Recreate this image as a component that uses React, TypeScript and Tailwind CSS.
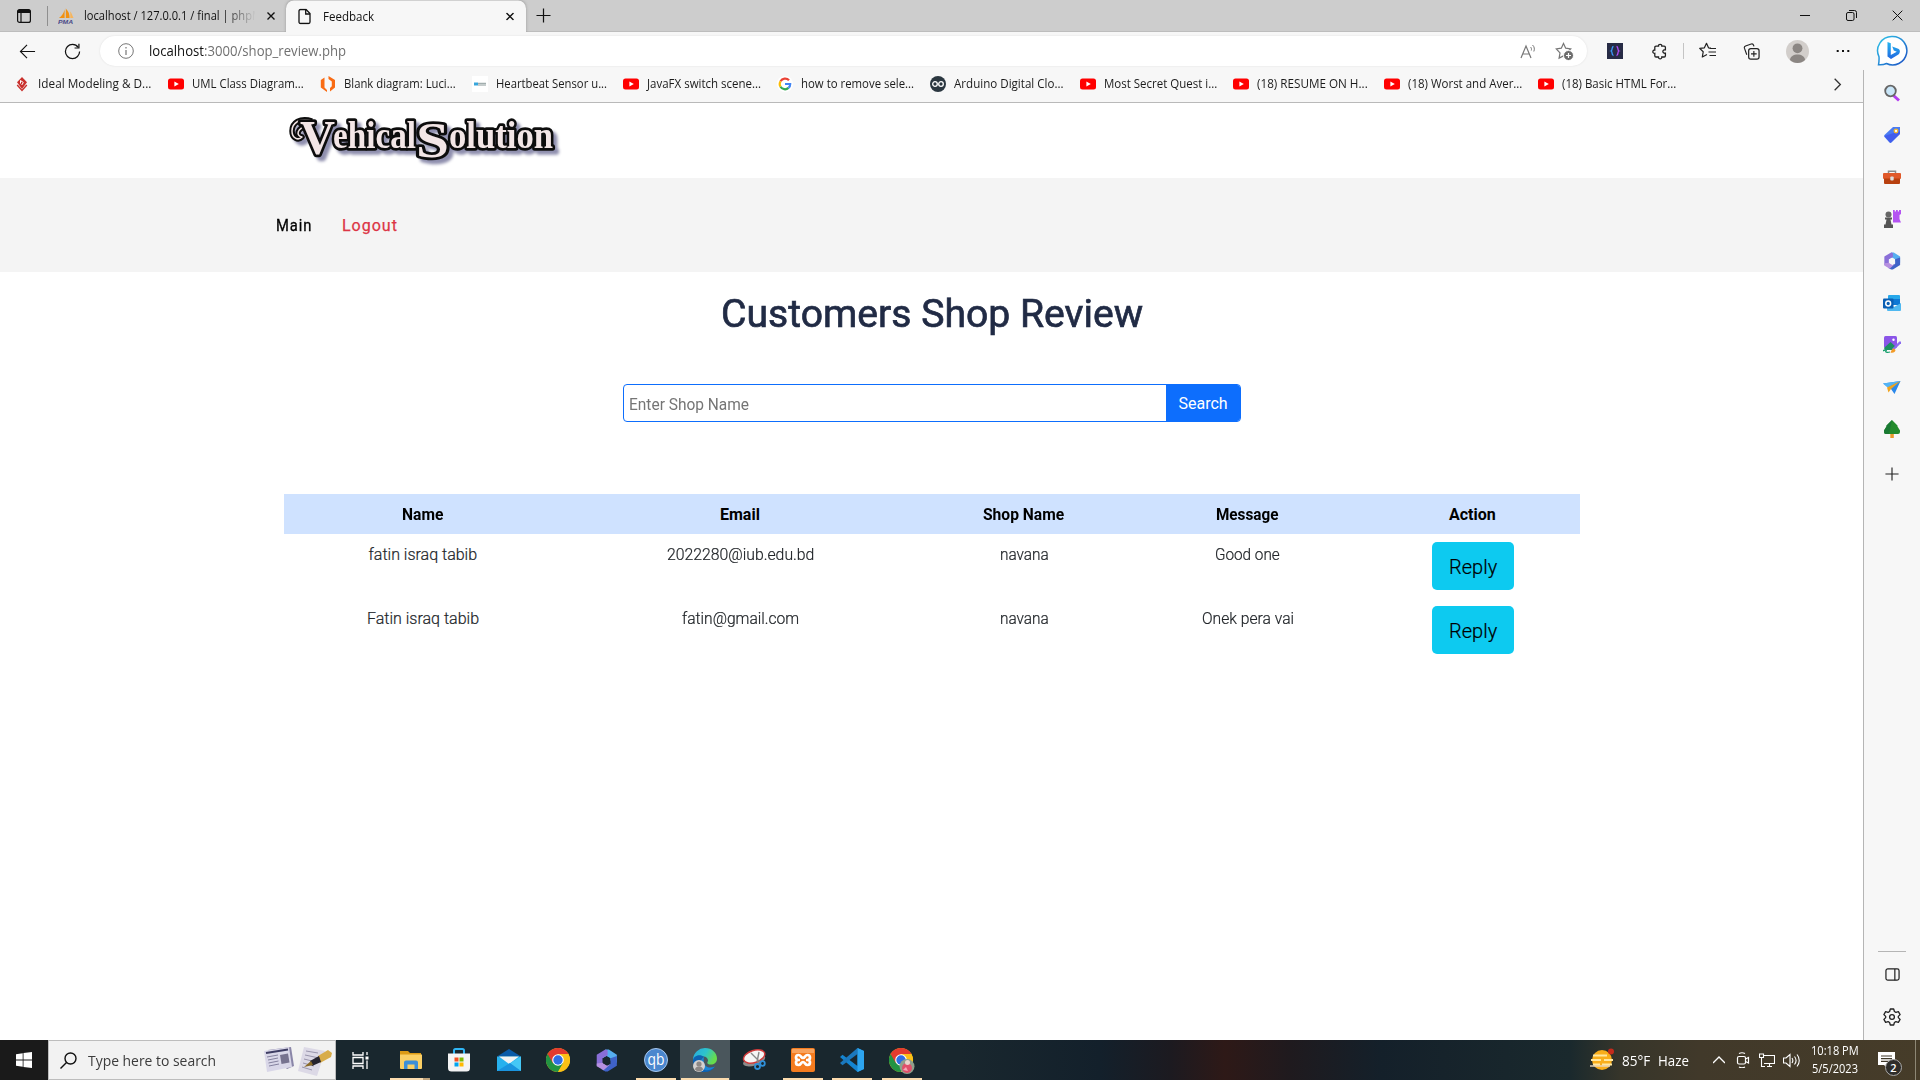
import { useLayoutEffect, useRef, useState, type ReactNode } from "react";

/** One line of text condensed or stretched to an exact width. */
function Fit({ w, className = "", children }: { w: number; className?: string; children: ReactNode }) {
  const ref = useRef<HTMLSpanElement>(null);
  const [scale, setScale] = useState(1);
  useLayoutEffect(() => {
    if (ref.current) setScale(w / ref.current.offsetWidth);
  }, [w]);
  return (
    <span className={`inline-block shrink-0 text-left whitespace-nowrap ${className}`} style={{ width: w }}>
      <span ref={ref} className="inline-block origin-left" style={{ transform: `scaleX(${scale})` }}>
        {children}
      </span>
    </span>
  );
}

function Cell({ className, children }: { className: string; children: ReactNode }) {
  return <div className={`flex shrink-0 items-center justify-center ${className}`}>{children}</div>;
}

function Ico({ s = 16, vb = 16, className = "", children }: { s?: number; vb?: number; className?: string; children: ReactNode }) {
  return (
    <svg width={s} height={s} viewBox={`0 0 ${vb} ${vb}`} fill="none" className={`shrink-0 ${className}`}>
      {children}
    </svg>
  );
}

const CloseX = ({ s = 8, sw = 1.4 }: { s?: number; sw?: number }) => (
  <Ico s={s} vb={8}><path d="M.5.5l7 7M7.5.5l-7 7" stroke="#111" strokeWidth={(sw * 8) / s} /></Ico>
);

/* ---------- Tab strip ---------- */
function TabStrip() {
  return (
    <div className="flex h-8 shrink-0 items-center border-b border-[#bdbdbd] bg-[#cdcdcd] text-[12px] text-[#111]">
      <Cell className="w-[47px]">
        <Ico s={16}>
          <rect x="1.6" y="1.6" width="12.8" height="12.8" rx="2" stroke="#111" strokeWidth="1.2" />
          <path d="M1.5 3.5a2 2 0 012-2h9a2 2 0 012 2V5h-13z" fill="#111" />
          <path d="M5 5v9" stroke="#111" strokeWidth="1.2" />
        </Ico>
      </Cell>
      <div className="h-5 w-px bg-[#8f8f8f]" />
      <div className="flex h-full w-[238px] items-center">
        <Cell className="ml-[10px] w-4">
          <svg width="17" height="16" viewBox="0 0 17 16">
            <path d="M7 1v9H1C4 8 6 5 7 1zM8.3 0c3 3 4 6 4 10h-4z" fill="#f29111" />
            <path d="M13 3c1.500 2 2 4 3.500 7H13z" fill="#f7b55c" />
            <text x="0" y="16" fontSize="6.500" fontWeight="900" fontStyle="italic" fontFamily="Liberation Sans" fill="#4a4a88" textLength="16" lengthAdjust="spacingAndGlyphs">PMA</text>
          </svg>
        </Cell>
        <div className="ml-[10px] w-[175px] [mask-image:linear-gradient(to_right,black_80%,transparent_98%)]">
          <Fit w={178}>localhost / 127.0.0.1 / final | phpM</Fit>
        </div>
        <Cell className="ml-[6px] w-3"><CloseX /></Cell>
      </div>
      <div className="flex h-8 w-60 translate-y-[0.500px] items-center rounded-t-lg bg-[#f7f7f7] shadow-[0_0_3px_#999] [clip-path:inset(0_-3px_0_-3px)]">
        <Cell className="ml-[11px] w-4">
          <Ico s={16}>
            <path d="M3.500 1H9l4 4v8.500a1.500 1.500 0 01-1.500 1.500h-8A1.500 1.500 0 012 13.500v-11A1.500 1.500 0 013.500 1z" stroke="#111" strokeWidth="1.300" />
            <path d="M8.700 1v4.500H13" stroke="#111" strokeWidth="1.300" />
          </Ico>
        </Cell>
        <div className="ml-[10px] w-[180px]"><Fit w={51}>Feedback</Fit></div>
        <Cell className="ml-px w-3"><CloseX /></Cell>
      </div>
      <Cell className="w-[34px]"><Ico s={15}><path d="M8 .5v15M.5 8h15" stroke="#111" strokeWidth="1.300" /></Ico></Cell>
      <div className="flex-1" />
      <Cell className="w-[46px]"><div className="h-px w-[10px] bg-[#111]" /></Cell>
      <Cell className="w-[46px]">
        <Ico s={11} vb={11}>
          <rect x=".5" y="2.500" width="7.500" height="8" rx="1.500" stroke="#111" />
          <path d="M3 .5h5.500a2 2 0 012 2V8" stroke="#111" />
        </Ico>
      </Cell>
      <Cell className="w-[46px]"><CloseX s={11} sw={1} /></Cell>
    </div>
  );
}

/* ---------- Address bar row ---------- */
function Toolbar() {
  return (
    <div className="flex h-[38px] shrink-0 items-center">
      <Cell className="w-[55px]">
        <Ico s={17} vb={18}><path d="M17 9H1.500M8.500 2L1.500 9l7 7" stroke="#111" strokeWidth="1.200" /></Ico>
      </Cell>
      <Cell className="w-[34px]">
        <Ico s={17} vb={18}>
          <path d="M16.500 9A7.500 7.500 0 119 1.500c2.600 0 4.800 1.300 6 3.200" stroke="#111" strokeWidth="1.300" />
          <path d="M15.800.8v4.500h-4.600" stroke="#111" strokeWidth="1.300" />
        </Ico>
      </Cell>
      <div className="ml-[11px] flex h-[30px] w-[1487px] shrink-0 items-center rounded-full bg-white shadow-[0_0_2px_#ddd]">
        <Cell className="w-[52px]">
          <Ico s={16}>
            <circle cx="8" cy="8" r="7.300" stroke="#767676" />
            <path d="M8 7v5M8 4v1.500" stroke="#767676" strokeWidth="1.200" />
          </Ico>
        </Cell>
        <div className="-ml-[3px] text-[14px] leading-5 text-[#707070]">
          <Fit w={197}><span className="text-[#111]">localhost</span>:3000/shop_review.php</Fit>
        </div>
        <div className="flex-1" />
        <Cell className="w-9">
          <Ico s={17} vb={17}>
            <path d="M1 15L6 3l5 12M2.800 11h6.400" stroke="#767676" strokeWidth="1.200" />
            <path d="M10.500 4c1 .9 1.200 2.300.8 3.500M12.500 2c2 1.700 2.300 4.300 1.300 6.500" stroke="#767676" />
          </Ico>
        </Cell>
        <Cell className="mr-[5px] w-9">
          <Ico s={19} vb={19}>
            <path d="M8.500 1.500l2.200 4.700 5 .7-3.600 3.500.3 2-3.900 1.500-4.400 2.200.9-5.200L1.300 6.900l5-.7z" stroke="#767676" strokeWidth="1.200" />
            <circle cx="13.500" cy="13.500" r="5" fill="#6d6d6d" stroke="#fff" />
            <path d="M13.500 11v5M11 13.500h5" stroke="#fff" strokeWidth="1.200" />
          </Ico>
        </Cell>
      </div>
      <Cell className="w-14">
        <Ico s={16}>
          <rect width="16" height="16" fill="#272b45" />
          <path d="M6.500 3.500c-2.200 0-.8 4-2.300 4.500 1.500.5.100 4.500 2.300 4.500" stroke="#3b9bff" strokeWidth="1.300" />
          <path d="M9.500 3.500c2.200 0 .8 4 2.300 4.500-1.500.5-.1 4.500-2.300 4.500" stroke="#b44cff" strokeWidth="1.300" />
        </Ico>
      </Cell>
      <Cell className="w-[34px]">
        <Ico s={17} vb={17}>
          <path d="M4 3.200h2.500c-.3-2.500 3.600-2.500 3.300 0h2.400a1.200 1.200 0 011.200 1.200v2.400c-3.400-.5-3.400 3.900 0 3.400v2.600a1.200 1.200 0 01-1.200 1.200H9.800c.3 2.500-3.600 2.500-3.300 0H4a1.200 1.200 0 01-1.200-1.200v-2.500c-2.600.3-2.600-3.600 0-3.300V4.400A1.200 1.200 0 014 3.200z" stroke="#222" strokeWidth="1.300" />
        </Ico>
      </Cell>
      <Cell className="w-3"><div className="h-4 w-px bg-[#c4c4c4]" /></Cell>
      <Cell className="w-[38px]">
        <Ico s={18} vb={18}>
          <path d="M12 6l-2.500-.2L7.500 1.300 5.400 5.800l-4.700.6 3.500 3.400-.9 5.200L8 12.500" stroke="#222" strokeWidth="1.200" strokeLinejoin="round" />
          <path d="M10.500 6.500H17M9.500 10H17M10.500 13.500H17" stroke="#222" strokeWidth="1.200" />
        </Ico>
      </Cell>
      <Cell className="w-[49px]">
        <Ico s={17} vb={18}>
          <rect x="6" y="6" width="11" height="11" rx="2.300" stroke="#222" strokeWidth="1.300" />
          <path d="M11.500 8.500v6M8.500 11.500h6" stroke="#222" strokeWidth="1.200" />
          <path d="M4 12.500l-2.500-7a2 2 0 011.200-2.400l6-2a2 2 0 012.500 1.300l.4 1.200" stroke="#222" strokeWidth="1.200" />
        </Ico>
      </Cell>
      <Cell className="w-[42px]">
        <Ico s={23} vb={23}>
          <circle cx="11.500" cy="11.500" r="11.500" fill="#d2cecb" />
          <circle cx="11.500" cy="8.300" r="4.900" fill="#8b8683" />
          <path d="M4 20c0-7.500 15-7.500 15 0-4 4-11 4-15 0z" fill="#8b8683" />
        </Ico>
      </Cell>
      <Cell className="w-[45px] pl-[5px]">
        <Ico s={14} vb={14}><path d="M.7 7h2M6 7h2M11.300 7h2" stroke="#111" strokeWidth="2" /></Ico>
      </Cell>
    </div>
  );
}

/* ---------- Bookmarks ---------- */
const YouTube = () => (
  <Ico s={16}><rect y="2.500" width="16" height="11" rx="2.500" fill="#f00" /><path d="M6.400 5.600v4.800L10.800 8z" fill="#fff" /></Ico>
);
const bookmarks: { label: string; w: number; cell: string; icon: ReactNode }[] = [
  {
    label: "Ideal Modeling & D...", w: 113, cell: "w-[154px]",
    icon: <Ico s={16}><path d="M8 1l5 5.200L8 13 3 6.200z" fill="#c9302c" /><path d="M3.200 9L8 14.500 12.800 9" stroke="#c9302c" strokeWidth="1.400" /><path d="M6.500 7.500v-3l2.800 2-1.600 2.500" stroke="#fff" /></Ico>,
  },
  { label: "UML Class Diagram...", w: 112, cell: "w-[152px]", icon: <YouTube /> },
  {
    label: "Blank diagram: Luci...", w: 112, cell: "w-[152px]",
    icon: <Ico s={16}><path d="M4.500 1.500v10l2.500 2.500v2L.8 11.500V4zM8.500 0l6.500 4v7.500l-5 4v-3.500l1.800-1.700V5.500L8.500 3z" fill="#f96b13" /></Ico>,
  },
  {
    label: "Heartbeat Sensor u...", w: 111, cell: "w-[151px]",
    icon: <Ico s={16}><rect width="16" height="16" fill="#fff" /><path d="M2 8h4" stroke="#38a6dc" strokeWidth="3" /><path d="M6 7.300h8M6 9h8" stroke="#8b9a9a" /></Ico>,
  },
  { label: "JavaFX switch scene...", w: 114, cell: "w-[154px]", icon: <YouTube /> },
  {
    label: "how to remove sele...", w: 113, cell: "w-[153px]",
    icon: <Ico s={16}>
      <circle cx="8" cy="8" r="8" fill="#fff" />
      <path d="M12 4.300A5.200 5.200 0 003.500 5.300" stroke="#ea4335" strokeWidth="2.200" />
      <path d="M3.500 5.300a5.200 5.200 0 000 5.400" stroke="#fbbc05" strokeWidth="2.200" />
      <path d="M3.500 10.700a5.200 5.200 0 008 1.200" stroke="#34a853" strokeWidth="2.200" />
      <path d="M11.500 11.900A5 5 0 0013.200 8H8" stroke="#4285f4" strokeWidth="2.200" />
    </Ico>,
  },
  {
    label: "Arduino Digital Clo...", w: 110, cell: "w-[150px]",
    icon: <Ico s={16}><circle cx="8" cy="8" r="8" fill="#2b3740" /><circle cx="5" cy="8" r="2.300" stroke="#fff" strokeWidth="1.300" /><circle cx="11" cy="8" r="2.300" stroke="#fff" strokeWidth="1.300" /></Ico>,
  },
  { label: "Most Secret Quest i...", w: 113, cell: "w-[153px]", icon: <YouTube /> },
  { label: "(18) RESUME ON H...", w: 111, cell: "w-[151px]", icon: <YouTube /> },
  { label: "(18) Worst and Aver...", w: 114, cell: "w-[154px]", icon: <YouTube /> },
  { label: "(18) Basic HTML For...", w: 114, cell: "w-[150px]", icon: <YouTube /> },
];

function Bookmarks() {
  return (
    <div className="flex h-[33px] shrink-0 items-center border-b border-[#b9b9b9] pb-1 pl-[14px] text-[12px] leading-4 text-[#1b1b1b]">
      {bookmarks.map((b) => (
        <div key={b.label} className={`flex shrink-0 items-center gap-2 ${b.cell}`}>
          {b.icon}
          <Fit w={b.w}>{b.label}</Fit>
        </div>
      ))}
      <div className="flex-1" />
      <Cell className="mr-[18px] w-4"><Ico s={13}><path d="M4.500 1l7 7-7 7" stroke="#333" strokeWidth="1.600" /></Ico></Cell>
    </div>
  );
}

/* ---------- Web page ---------- */
function Logo() {
  const flourish = "M34 18C22 14 14 20 14 28c0 7 6 10 10 6-6-1-6-9 6-11";
  return (
    <svg
      width="296" height="72" viewBox="0 0 296 72"
      fontFamily="Liberation Serif" fontWeight="700" fill="#f3e6e6" stroke="#0d0d0d" strokeWidth="5.500" strokeLinejoin="round" paintOrder="stroke"
      className="[filter:drop-shadow(4px_4px_1.500px_#8f8fae)]"
    >
      <path d={flourish} fill="none" />
      <path d={flourish} fill="none" stroke="#f3e6e6" strokeWidth="1.500" />
      <text x="22" y="51" fontSize="49" textLength="35" lengthAdjust="spacingAndGlyphs">V</text>
      <text x="55" y="45" fontSize="37" textLength="83" lengthAdjust="spacingAndGlyphs">ehical</text>
      <text x="138" y="54" fontSize="50" textLength="33" lengthAdjust="spacingAndGlyphs">S</text>
      <text x="171" y="45" fontSize="37" textLength="104" lengthAdjust="spacingAndGlyphs">olution</text>
    </svg>
  );
}

const columns = [
  { title: "Name", w: 41, cell: "w-[278px]" },
  { title: "Email", w: 40, cell: "w-[357px]" },
  { title: "Shop Name", w: 81, cell: "w-[210px]" },
  { title: "Message", w: 62, cell: "w-[237px]" },
  { title: "Action", w: 47, cell: "w-[214px]" },
];
const rows: { text: string; w: number }[][] = [
  [{ text: "fatin israq tabib", w: 109 }, { text: "2022280@iub.edu.bd", w: 147 }, { text: "navana", w: 49 }, { text: "Good one", w: 65 }],
  [{ text: "Fatin israq tabib", w: 112 }, { text: "fatin@gmail.com", w: 117 }, { text: "navana", w: 49 }, { text: "Onek pera vai", w: 92 }],
];

function ReviewPage() {
  return (
    <main className="flex min-h-0 flex-1 flex-col bg-white font-[Roboto,sans-serif] text-[16px] leading-6">
      <header className="h-[75px] shrink-0 pl-[278px]"><Logo /></header>
      <nav className="flex h-[94px] shrink-0 items-center gap-[30px] bg-[#f4f4f4] pt-0.5 pl-[276px]">
        <Fit w={36} className="tracking-[1px] text-black [-webkit-text-stroke:0.300px]">Main</Fit>
        <Fit w={56} className="tracking-[1px] text-[#dc3545] [-webkit-text-stroke:0.250px]">Logout</Fit>
      </nav>
      <h1 className="mt-[18px] flex justify-center text-[39.500px] leading-[48px] text-[#212b45] [-webkit-text-stroke:0.700px]">
        <Fit w={422}>Customers Shop Review</Fit>
      </h1>
      <form className="mx-auto mt-[46px] flex h-[38px] w-[618px] overflow-hidden rounded-[4px] border border-[#0d6efd]">
        <div className="flex-1 pt-2 pl-[5px] text-[#757575]"><Fit w={120}>Enter Shop Name</Fit></div>
        <div className="flex w-[74px] items-center justify-center bg-[#0d6efd] pt-0.5 pl-px text-white"><Fit w={49}>Search</Fit></div>
      </form>
      <div className="mx-auto mt-[72px] w-[1296px]">
        <div className="flex h-10 items-center bg-[#cfe2ff] pt-0.5 font-bold text-black">
          {columns.map((c) => (
            <div key={c.title} className={`flex justify-center ${c.cell}`}><Fit w={c.w}>{c.title}</Fit></div>
          ))}
        </div>
        {rows.map((row, i) => (
          <div key={i} className="flex h-16 pt-2 text-[#212529]">
            {row.map((v, j) => (
              <div key={j} className={`flex justify-center pt-px pl-px font-light [-webkit-text-stroke:0.200px] ${columns[j].cell}`}><Fit w={v.w}>{v.text}</Fit></div>
            ))}
            <div className="flex w-[214px] justify-center">
              <div className="flex h-12 w-[82px] items-center justify-center rounded-[5px] bg-[#0dcaf0] pt-0.5 pl-px text-[20px] font-light text-black [-webkit-text-stroke:0.200px]">
                <Fit w={48}>Reply</Fit>
              </div>
            </div>
          </div>
        ))}
      </div>
    </main>
  );
}

/* ---------- Edge sidebar ---------- */
const M365 = ({ s, hole }: { s: number; hole: string }) => (
  <Ico s={s} vb={20}>
    <path d="M9 .5h3L19 5v7l-5.500-2V8L10 6 6.500 8z" fill="#56aef0" />
    <path d="M9 .5L1.500 5v9.500L6.500 17V8L11 5.500V1z" fill="#8a6fd8" />
    <path d="M19 6v8.500L11 19.500H9l-3.500-2L13.500 13V8z" fill="#3f62c8" />
    <path d="M1.500 12.500L6.500 12l4 2.500 3-1.500-6 5.500L1.500 15z" fill="#b690e0" />
    <path d="M10 6.500l3 1.700v3.800L10 14l-3-1.700V8.200z" fill={hole} />
  </Ico>
);
const sideIcons: ReactNode[] = [
  <Ico s={18} vb={18}><path d="M10.500 11.500l5.500 5" stroke="#b23cf0" strokeWidth="3" /><circle cx="7.500" cy="7" r="5.300" fill="#c9e6f8" stroke="#666" strokeWidth="1.800" /></Ico>,
  <Ico s={18} vb={18}><path d="M10 1h7v7L8.500 16.500a1.500 1.500 0 01-2 0L1.500 11a1.500 1.500 0 010-2z" fill="#4a7cf2" /><path d="M1.300 10l6 7 9.700-9v-3z" fill="#3d49ea" opacity=".6" /><circle cx="13" cy="5" r="1.800" fill="#fff" stroke="#f3b62c" strokeWidth="1.300" /></Ico>,
  <Ico s={18} vb={18}><path d="M5.500 5V3.200h7V5" stroke="#8a8a8a" strokeWidth="1.500" /><rect y="5" width="18" height="6" rx="1" fill="#e0592a" /><path d="M1 10.500h16V15a1 1 0 01-1 1H2a1 1 0 01-1-1z" fill="#b8400f" /><rect x="7.300" y="8.500" width="3.400" height="4" rx="1" fill="#ddd" /></Ico>,
  <Ico s={18} vb={18}><path d="M10 0h1.700v1.500h1.300V0h1.800v1.500H16V0h2v4l-1.500 1v4l1.500 3.500h-8V5z" fill="#b453f2" /><circle cx="5.500" cy="4.500" r="3" fill="#666" /><path d="M2 7.500h7v2H7.500l1 5H10V18H1v-3.500h1.500l1-5H2z" fill="#555" /></Ico>,
  <M365 s={18} hole="#f7f7f7" />,
  <Ico s={18} vb={18}><rect x="5" y="1" width="12" height="9" rx="1" fill="#28a8ea" /><path d="M5 5h12v6H5z" fill="#0f78d4" /><path d="M4 9l7 4 7-4v7a1 1 0 01-1 1H5a1 1 0 01-1-1z" fill="#50b8f0" /><rect y="4.500" width="10.500" height="10" rx="1" fill="#0a5fb4" /><circle cx="5.200" cy="9.500" r="2.400" stroke="#fff" strokeWidth="1.500" /></Ico>,
  <Ico s={18} vb={18}><rect x="1" width="13" height="12" rx="1.500" fill="#8b55e8" /><path d="M1 12l6.500-6 5 4.500L10 14H2z" fill="#1d8f63" /><circle cx="10.500" cy="3.800" r="1.200" fill="#fff" /><path d="M0 15c2-2 4-1 3 0s1 2 4 1" stroke="#17a06d" strokeWidth="1.300" /><path d="M17 6.500L10.500 13" stroke="#8b6bf0" strokeWidth="2.400" strokeLinecap="round" /><path d="M11 12.500c-2 0-2.500 2-3.500 4 2.500.8 5-.5 5-2.500z" fill="#f39b26" /></Ico>,
  <Ico s={18} vb={18}><path d="M0 5.500L17.500 3l-6 13L8 11z" fill="#2b88ea" /><path d="M0 5.500L17.500 3 4.500 9.500z" fill="#53b4f5" /><path d="M4 9.500L17.500 3 8 11l-2.500 3.500z" fill="#f0a41f" /></Ico>,
  <Ico s={18} vb={18}><rect x="7.300" y="13" width="3.500" height="5" fill="#e99a2c" /><path d="M9 0l5.500 5.500v1L17 10.500V12a2 2 0 01-2 2H3a2 2 0 01-2-2v-1.500L3.500 6.500v-1z" fill="#238b2c" /><path d="M9 0L3.500 5.500v1L1 10.500V12a2 2 0 002 2h3z" fill="#1a7a33" /></Ico>,
];

function Sidebar() {
  return (
    <aside className="flex w-[57px] shrink-0 flex-col items-center bg-[#f7f7f7]">
      <Cell className="h-[38px] w-full">
        <Ico s={32} vb={32}>
          <defs>
            <linearGradient id="bing" x1="0" y1="0" x2="1" y2="1"><stop stopColor="#2fc6e8" /><stop offset="1" stopColor="#1b4fc4" /></linearGradient>
            <linearGradient id="bingb" x1="0" y1="0" x2="0" y2="1"><stop stopColor="#25b6f0" /><stop offset="1" stopColor="#2268e0" /></linearGradient>
          </defs>
          <path d="M16.500 1.500a14.200 14.200 0 11-6 27c-2.500 1.200-5.500 1.500-8 1.300.5-3 .7-5.500.5-8A14.200 14.200 0 0116.500 1.500z" fill="#fff" stroke="url(#bing)" strokeWidth="1.500" />
          <path d="M11.500 7l3.300 1.200V20l6-3.200-3-1.300-1.600-4 6 2.300c2.600 1.200 2 4.700-.2 6L15 24l-3.500-2.400z" fill="url(#bingb)" />
        </Ico>
      </Cell>
      <div className="flex w-full flex-1 flex-col items-center border-l border-[#b5b5b5]">
        <div className="flex flex-col items-center gap-6 pt-[14px]">
          {sideIcons.map((icon, i) => <div key={i} className="h-[18px] w-[18px]">{icon}</div>)}
        </div>
        <Ico s={14} className="mt-[29px]"><path d="M8 .5v15M.5 8h15" stroke="#222" strokeWidth="1.300" /></Ico>
        <div className="flex-1" />
        <div className="h-px w-7 bg-[#b5b5b5]" />
        <Ico s={15} className="mt-[15px]">
          <rect x="1" y="2" width="14" height="12" rx="2" stroke="#222" strokeWidth="1.300" /><path d="M10.500 2v12" stroke="#222" strokeWidth="1.300" />
        </Ico>
        <Ico s={18} vb={18} className="mt-[26px] mb-[14px]">
          <circle cx="9" cy="9" r="2.400" stroke="#222" strokeWidth="1.300" />
          <path d="M7.300 1h3.400l.7 2.500 1.500.9 2.500-.7 1.700 2.900L15.300 8.400v1.200l1.800 1.800-1.700 2.900-2.500-.7-1.500.9-.7 2.500H7.300l-.7-2.500-1.500-.9-2.500.7-1.700-2.900 1.800-1.800V8.400L.9 6.600l1.700-2.900 2.500.7 1.500-.9z" stroke="#222" strokeWidth="1.300" strokeLinejoin="round" />
        </Ico>
      </div>
    </aside>
  );
}

/* ---------- Taskbar ---------- */
const Chrome = () => (
  <>
    <circle cx="12" cy="12" r="12" fill="#fbc116" />
    <path d="M12 12L1.600 6A12 12 0 0012 24l5.200-9z" fill="#229342" />
    <path d="M12 6h10.400A12 12 0 001.600 6l5.200 9z" fill="#e33b2e" />
    <path d="M12 24l5.200-9V9L22.400 6A12 12 0 0112 24z" fill="#fbc116" />
    <circle cx="12" cy="12" r="5.800" fill="#fff" />
    <circle cx="12" cy="12" r="4.700" fill="#2f6fe4" />
  </>
);
const apps: { icon: ReactNode; bar?: string; active?: boolean }[] = [
  { icon: <Ico s={17} vb={17}><path d="M1 0v3h10V0M1 17v-3h10v3M1 5.500h10v6H1zM15 0v3M15 8.500V17" stroke="#fff" strokeWidth="1.300" /><path d="M13.500 4.500h3v3h-3z" fill="#fff" /></Ico> },
  {
    icon: <Ico s={22} vb={22} className="ml-0.5"><path d="M0 2h8l2 2h11v6H0z" fill="#dd9b15" /><path d="M0 5.500h22V19a1 1 0 01-1 1H1a1 1 0 01-1-1z" fill="#fbd065" /><path d="M4 20v-6.500a2 2 0 012-2h10a2 2 0 012 2V20h-3.500v-4.500h-7V20z" fill="#3d8fd8" /></Ico>,
    bar: "w-10 bg-[linear-gradient(to_right,#fcdcae_82%,#bfa37c_82%)]",
  },
  { icon: <Ico s={24} vb={24} className="ml-px"><path d="M7 7V2.500A1.500 1.500 0 018.500 1h7A1.500 1.500 0 0117 2.500V7" stroke="#30b6f5" strokeWidth="2" /><path d="M1 5.500h22V20a3.500 3.500 0 01-3.500 3.500h-15A3.500 3.500 0 011 20z" fill="#f4f4f4" /><path d="M7.500 9.500h4v4h-4z" fill="#f25022" /><path d="M12.500 9.500h4v4h-4z" fill="#7fba00" /><path d="M7.500 14.500h4v4h-4z" fill="#00a4ef" /><path d="M12.500 14.500h4v4h-4z" fill="#ffb900" /></Ico> },
  { icon: <Ico s={24} vb={24} className="ml-px"><path d="M0 8.500L12 1l12 7.500z" fill="#0a5ba8" /><path d="M0 8.500h24V23H0z" fill="#27b1ee" /><path d="M2 8.500h20L12 16z" fill="#f3f3f3" /><path d="M24 8.500V23L8 13.500l4 2.500z" fill="#45c8f6" /><path d="M0 23l13-8 11 8z" fill="#1a94df" /></Ico> },
  { icon: <Ico s={24} vb={24} className="ml-px"><Chrome /></Ico> },
  { icon: <M365 s={23} hole="#19272e" /> },
  { icon: <Ico s={24} vb={24}><circle cx="12" cy="12" r="11.500" fill="#4a87ce" stroke="#a8c8ee" /><text x="3.500" y="17" fontSize="16" fontFamily="Open Sans" fill="#fff" textLength="17" lengthAdjust="spacingAndGlyphs">qb</text></Ico>, bar: "w-10 bg-[#fcdcae]" },
  {
    icon: <Ico s={24} vb={24}>
      <defs><linearGradient id="edge" x1="0" y1="0" x2="1" y2=".4"><stop stopColor="#28a9e0" /><stop offset=".55" stopColor="#2dc3cc" /><stop offset="1" stopColor="#67dc4c" /></linearGradient></defs>
      <path d="M0 11A12 12 0 0112 0c7 0 12 5 12 10.500 0 4-3 6-6 6-3.500 0-4-1.500-3.500-2.500 1.500-2-.5-5.500-4-5.500C5 8 1 10 0 14z" fill="url(#edge)" />
      <path d="M0 12c1-5 8-6 11-3-3 1-4 4-3 7.500 1.500 5 7 5.500 14 2A12 12 0 0112 24C5 24-.5 18.500 0 12z" fill="#0d62b3" />
      <path d="M11 9c-3 1-6 8-1 12 3 2.500 8 1.500 12-2.500-6 3-13 0-11-9.500z" fill="#1a86d6" />
      <circle cx="6" cy="18" r="6" fill="#d5d1ce" /><circle cx="6" cy="16" r="2.600" fill="#8d8885" /><path d="M2 21.500c0-4 8-4 8 0-2 2.500-6 2.500-8 0z" fill="#8d8885" />
    </Ico>,
    bar: "w-12 bg-[#fcdcae]", active: true,
  },
  { icon: <Ico s={24} vb={24}><ellipse cx="12" cy="12.500" rx="11.500" ry="5" fill="#8c8c8c" transform="rotate(-18 12 12)" /><ellipse cx="12" cy="8.500" rx="11" ry="6" fill="#f6f6f6" stroke="#cf3a3a" strokeWidth="1.500" transform="rotate(-18 12 8)" /><path d="M9 5l9 9M17 4l-2 10" stroke="#888" strokeWidth="1.400" /><circle cx="15.500" cy="18.500" r="2.500" stroke="#2f8fd8" strokeWidth="1.800" /><circle cx="20.500" cy="15.500" r="2.300" stroke="#2f8fd8" strokeWidth="1.800" /></Ico> },
  { icon: <Ico s={24} vb={24}><rect width="24" height="24" rx="2" fill="#f57c1f" /><path d="M1 1h22v4H1z" fill="#f9a35d" /><path d="M9 12H7.500a2.500 2.500 0 110-5C10 7 10 10 12 10s2-3 4.500-3a2.500 2.500 0 010 5 2.500 2.500 0 010 5C14 17 14 14 12 14s-2 3-4.500 3a2.500 2.500 0 010-5M15 12h1.500" stroke="#fff" strokeWidth="2.700" /></Ico>, bar: "w-10 bg-[#fcdcae]" },
  { icon: <Ico s={24} vb={24}><path d="M17.500 0L24 3v18l-6.500 3L0 9l2.500-2.200L17.500 18z" fill="#1484d0" /><path d="M17.500 0L0 15l2.500 2.200L17.500 6z" fill="#1b78bd" /><path d="M17.500 0L24 3v18l-6.500 3z" fill="#2da5ef" /></Ico>, bar: "w-10 bg-[#fcdcae]" },
  { icon: <Ico s={26} vb={26} className="mt-0.5"><Chrome /><circle cx="18" cy="18.500" r="7.500" fill="#8fa08c" /><circle cx="18" cy="20" r="5" fill="#e0506a" /><circle cx="18.500" cy="14.500" r="2.500" fill="#e8d5cc" /><path d="M14 22l3-3 2 4z" fill="#f5a7b5" /></Ico>, bar: "w-10 bg-[#fcdcae]" },
];

function Taskbar() {
  return (
    <div className="flex h-10 shrink-0 items-center bg-[linear-gradient(to_right,#19272e_0px,#19272e_960px,#13202b_1100px,#1c1a20_1170px,#2e1917_1225px,#1f1a1e_1290px,#14202a_1380px,#1a292d_1570px,#36352a_1620px,#41392a_1700px,#463c29_1920px)] text-white">
      <Cell className="h-full w-12 bg-[#1a1a1a]">
        <Ico s={16}><path d="M0 2.200L6.700 1.200v6.400H0zM7.500 1.100L16 0v7.600H7.500zM0 8.400h6.700v6.400L0 13.800zM7.500 8.400H16V16l-8.500-1.100z" fill="#fff" /></Ico>
      </Cell>
      <div className="flex h-full w-72 shrink-0 items-center border border-[#bdbdbd] bg-[#f2f2f2] text-[15px] text-[#3c3c3c]">
        <Ico s={17} vb={17} className="ml-[11px]"><circle cx="10.500" cy="6.500" r="5.500" stroke="#111" strokeWidth="1.400" /><path d="M6.500 10.500L.5 16.500" stroke="#111" strokeWidth="1.400" /></Ico>
        <Fit w={128} className="ml-[11px]">Type here to search</Fit>
        <svg width="72" height="32" viewBox="0 0 72 32" className="mt-1 ml-[47px]">
          <path d="M5 4l23-3 3 19-7 3z" fill="#8a86a8" />
          <path d="M1 5l25-4 3 20-25 5z" fill="#d9d7e8" />
          <path d="M3 7l22-3.500" stroke="#3e3d63" strokeWidth="2" />
          <path d="M4 11l11-2M5 14l10-2M5.500 17l10-2M6 20l10-2" stroke="#85829f" />
          <path d="M17 9l8-1.500 1.500 9-8 1.500z" fill="#77738f" />
          <path d="M41 1l21 4-8 25-19-5z" fill="#dcd9e6" />
          <path d="M43 5l12 2M42 9l14 3M41 13l12 3M40 17l11 3M39 21l10 3" stroke="#9894ab" fill="none" />
          <path d="M55 10l10-6 4 3-1 4-11 6z" fill="#d8ac4b" /><path d="M47 15l9-5 2 6-9 4z" fill="#25232e" /><path d="M41 21l7-6 2 4z" fill="#8a6a28" />
        </svg>
      </div>
      <div className="flex h-full shrink-0">
        {apps.map((a, i) => (
          <div key={i} className={`relative flex h-full w-[49.200px] items-center justify-center ${a.active ? "bg-[#4a565c]" : ""}`}>
            {a.icon}
            {a.bar && <div className={`absolute bottom-0 h-0.5 ${a.bar}`} />}
          </div>
        ))}
      </div>
      <div className="flex-1" />
      <Ico s={24} vb={24}>
        <circle cx="12" cy="12" r="10" fill="#f9ae1b" />
        <path d="M3 7.500h14M1 12h10M14 12h9M3 16.500h7M12 16.500h10" stroke="#ffe7a0" strokeWidth="1.800" />
        <path d="M0 18h20" stroke="#e8d7c0" strokeWidth="1.400" /><circle cx="21" cy="3.500" r="3" fill="#c42b1c" />
      </Ico>
      <div className="ml-2 flex gap-2 text-[15px]"><Fit w={28}>85°F</Fit><Fit w={31}>Haze</Fit></div>
      <Cell className="ml-[18px] w-6"><Ico s={12}><path d="M0 12l8-8 8 8" stroke="#fff" strokeWidth="1.800" /></Ico></Cell>
      <Cell className="w-6"><Ico s={16}><rect x="2.500" y="4.500" width="8" height="7.500" rx="1.500" stroke="#fff" strokeWidth="1.200" /><path d="M10.500 7l3-1.500v5.500l-3-1.500M4 1.500C6 .5 8 .5 10 1.500M4 15c2 1 4 1 6 0" stroke="#fff" strokeWidth="1.200" /></Ico></Cell>
      <Cell className="w-6"><Ico s={16}><path d="M5 3.500h10.500v8H5M8 14.500h5M10.500 11.500v3M.5 2h4v3.500h-4zM2.500 5.500V14.500H6" stroke="#fff" strokeWidth="1.100" /></Ico></Cell>
      <Cell className="w-6"><Ico s={17} vb={17}><path d="M.5 6h2.500l4-3.500v12L3 11H.5zM9 6c1 1.500 1 3.500 0 5M11.500 4.500c2 2.500 2 5.500 0 8M14 2.500c3 3.500 3 8.500 0 12" stroke="#fff" strokeWidth="1.100" /></Ico></Cell>
      <div className="flex w-[64px] flex-col items-center text-[12px] leading-[18px]"><Fit w={48}>10:18 PM</Fit><Fit w={46}>5/5/2023</Fit></div>
      <div className="relative ml-[11px] w-[37px]">
        <Ico s={17} vb={17}><path d="M0 0h17v13h-7v4l-4-4H0z" fill="#fff" /><path d="M3 4h11M3 6.700h11M3 9.400h8" stroke="#40392a" strokeWidth="1.200" /></Ico>
        <div className="absolute top-[7px] left-[7px] flex h-[17px] w-[17px] items-center justify-center rounded-full border border-[#aaa] bg-[#2e2d2a] text-[11px] leading-none font-semibold">2</div>
      </div>
      <div className="h-full w-[5px] border-l border-[#8d8775]" />
    </div>
  );
}

export default function App() {
  return (
    <div className="flex h-[1080px] w-[1920px] flex-col overflow-hidden bg-[#f7f7f7] font-['Open_Sans',sans-serif]">
      <TabStrip />
      <div className="flex min-h-0 flex-1">
        <div className="flex w-[1863px] shrink-0 flex-col">
          <Toolbar />
          <Bookmarks />
          <ReviewPage />
        </div>
        <Sidebar />
      </div>
      <Taskbar />
    </div>
  );
}
